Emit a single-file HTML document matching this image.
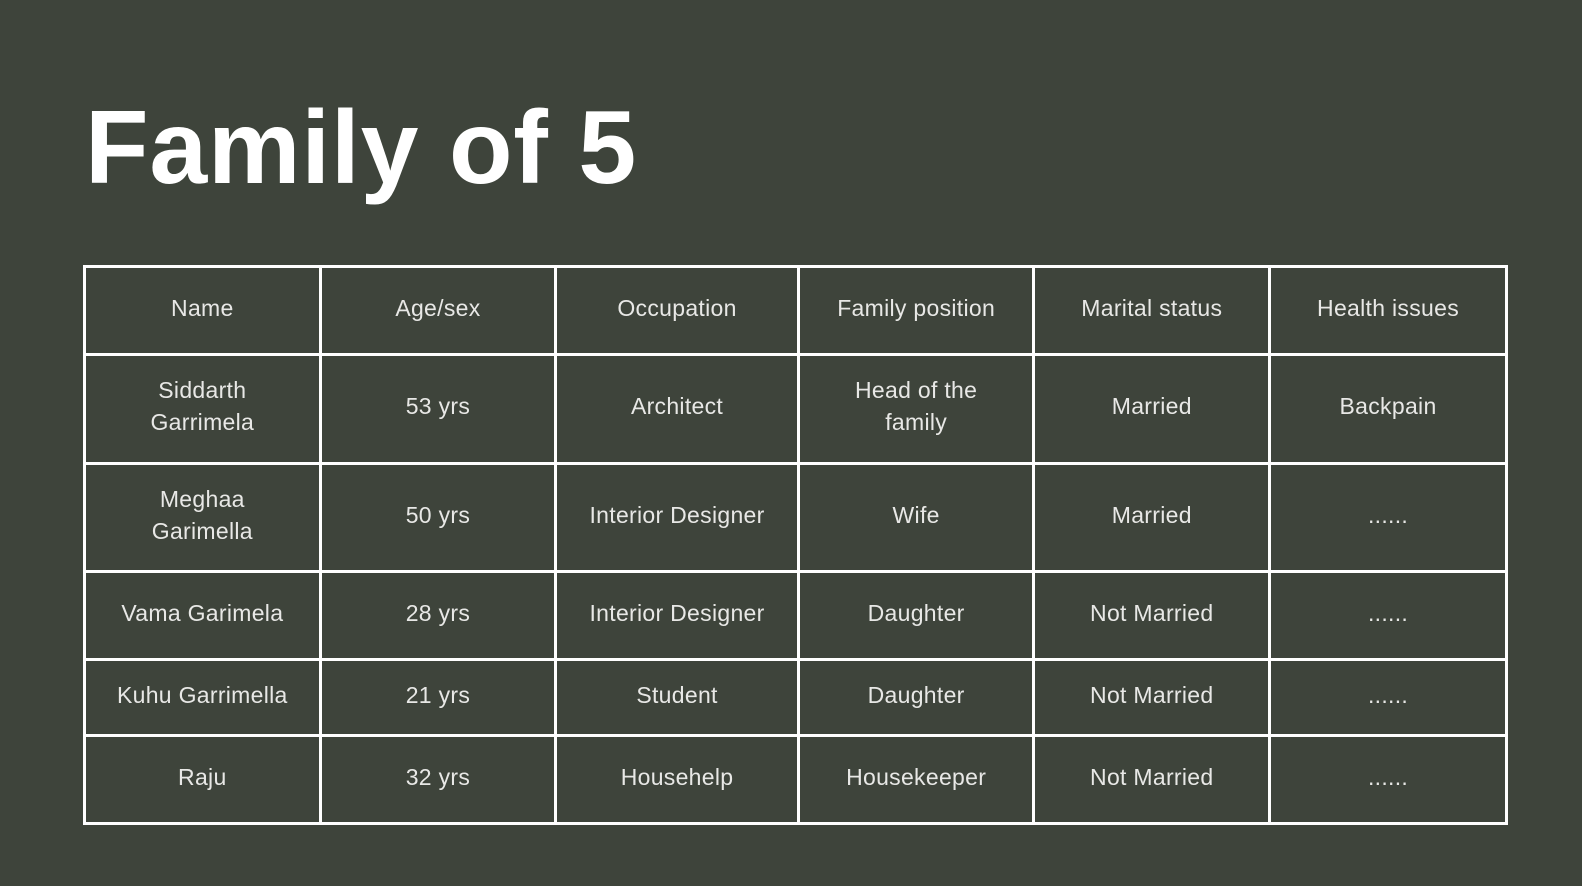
<!DOCTYPE html>
<html><head><style>
html,body{margin:0;padding:0;}
body{width:1582px;height:886px;background:#3e443b;position:relative;overflow:hidden;font-family:"Liberation Sans",sans-serif;}
h1{position:absolute;left:85px;top:86px;margin:0;font-size:104px;font-weight:bold;color:#fff;letter-spacing:0.8px;line-height:1.2;}
table{position:absolute;left:83px;top:265px;width:1425px;border-collapse:collapse;table-layout:fixed;}
td{border:3px solid #fff;color:#e8e8e6;font-size:23px;text-align:center;vertical-align:middle;line-height:32px;padding:0 0 6px 0;letter-spacing:0.3px;}
</style></head><body>
<h1>Family of 5</h1>
<table>
<colgroup><col style="width:16.57%"><col style="width:16.57%"><col style="width:17.06%"><col style="width:16.57%"><col style="width:16.57%"><col style="width:16.66%"></colgroup>
<tr style="height:88px"><td>Name</td><td>Age/sex</td><td>Occupation</td><td>Family position</td><td>Marital status</td><td>Health issues</td></tr>
<tr style="height:109px"><td>Siddarth<br>Garrimela</td><td>53 yrs</td><td>Architect</td><td>Head of the<br>family</td><td>Married</td><td>Backpain</td></tr>
<tr style="height:108px"><td>Meghaa<br>Garimella</td><td>50 yrs</td><td>Interior Designer</td><td>Wife</td><td>Married</td><td>......</td></tr>
<tr style="height:88px"><td>Vama Garimela</td><td>28 yrs</td><td>Interior Designer</td><td>Daughter</td><td>Not Married</td><td>......</td></tr>
<tr style="height:76px"><td>Kuhu Garrimella</td><td>21 yrs</td><td>Student</td><td>Daughter</td><td>Not Married</td><td>......</td></tr>
<tr style="height:88px"><td>Raju</td><td>32 yrs</td><td>Househelp</td><td>Housekeeper</td><td>Not Married</td><td>......</td></tr>
</table>
</body></html>
